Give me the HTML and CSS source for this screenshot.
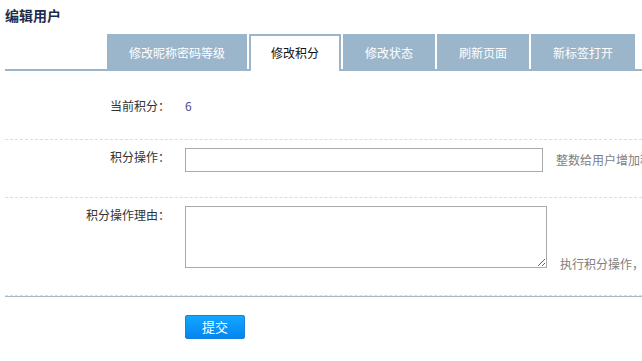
FILE: index.html
```html
<!DOCTYPE html>
<html lang="zh-CN">
<head>
<meta charset="utf-8">
<title>编辑用户</title>
<link rel="stylesheet" href="styles.css">
</head>
<body>
<div class="page">
  <h1 class="title">编辑用户</h1>
  <ul class="tabs">
    <li class="tab">修改昵称密码等级</li>
    <li class="tab active">修改积分</li>
    <li class="tab">修改状态</li>
    <li class="tab">刷新页面</li>
    <li class="tab">新标签打开</li>
  </ul>
  <form class="form">
    <div class="row">
      <div class="label">当前积分：</div>
      <div class="field"><span class="value">6</span></div>
    </div>
    <div class="row row-input">
      <div class="label">积分操作：</div>
      <div class="field field-center"><input class="text" type="text"><span class="hint">整数给用户增加积分，负数扣除用户积分</span></div>
    </div>
    <div class="row row-area">
      <div class="label">积分操作理由：</div>
      <div class="field"><textarea class="area"></textarea><span class="hint hint-area">执行积分操作，必须填写操作理由</span></div>
    </div>
    <div class="actions">
      <button class="btn" type="button">提交</button>
    </div>
  </form>
</div>
</body>
</html>
```
FILE: styles.css
```css
html, body {
  margin: 0;
  padding: 0;
  overflow: hidden;
  background: #fff;
}
body {
  font-family: "Noto Sans CJK SC", "Liberation Sans", sans-serif;
  font-size: 12px;
  color: #333;
}
.page {
  padding: 5px 0 0 5px;
}
.title {
  margin: 0;
  font-size: 14px;
  line-height: 20px;
  font-weight: bold;
  color: #1d2b4c;
}
.tabs {
  list-style: none;
  margin: 9px 0 0 0;
  padding: 0 0 0 102px;
  display: flex;
  height: 35px;
  border-bottom: 2px solid #9bb6cb;
}
.tab {
  box-sizing: border-box;
  height: 35px;
  padding: 0 20px;
  margin-right: 2px;
  border: 2px solid #9bb6cb;
  border-bottom: 0;
  background: #9bb6cb;
  color: #fff;
  line-height: 33px;
  white-space: nowrap;
}
.tab.active {
  height: 37px;
  background: #fff;
  color: #111;
}
.form {
  margin-top: 18px;
}
.row {
  display: grid;
  grid-template-columns: 165px 1fr;
  column-gap: 15px;
  padding: 8px 0 24px 0;
  border-bottom: 1px dashed #dcdcdc;
}
.row-input {
  padding: 8px 0 25px 0;
}
.row-area {
  padding: 8px 0 27px 0;
}
.label {
  text-align: right;
  line-height: 18px;
}
.field {
  white-space: nowrap;
  line-height: 18px;
}
.field-center {
  display: flex;
  align-items: center;
}
.value {
  color: #4b4a8c;
}
.text {
  box-sizing: border-box;
  width: 358px;
  height: 24px;
  margin: 0;
  border: 1px solid #aaa;
  padding: 0 4px;
  font: inherit;
}
.area {
  box-sizing: border-box;
  width: 362px;
  height: 62px;
  margin: 0;
  border: 1px solid #aaa;
  padding: 2px 4px;
  font: inherit;
  vertical-align: bottom;
}
.hint {
  color: #808080;
  margin-left: 13px;
}
.hint-area {
  display: inline-block;
  line-height: 12px;
  vertical-align: bottom;
  margin-bottom: -2px;
}
.actions {
  border-top: 1px solid #a7b8c6;
  padding: 18px 0 0 180px;
}
.btn {
  box-sizing: border-box;
  width: 60px;
  height: 24px;
  margin: 0;
  padding: 0;
  border: 1px solid #1a80dc;
  border-radius: 2px;
  background: linear-gradient(#13a7ff, #0584f2);
  color: #fff;
  font-family: "Noto Sans CJK SC", sans-serif;
  font-size: 13px;
  line-height: 22px;
  cursor: pointer;
}
```
